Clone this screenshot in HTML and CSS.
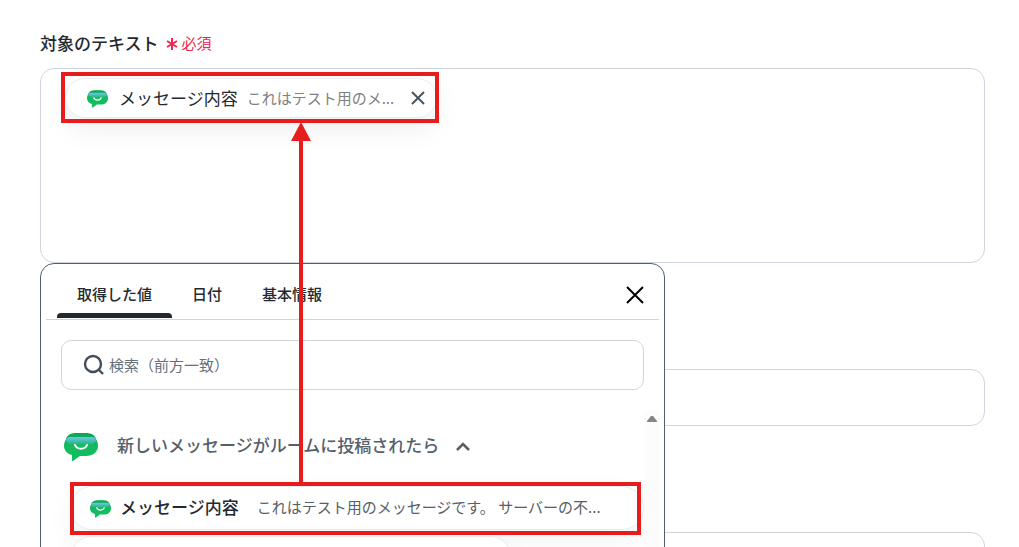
FILE: index.html
```
<!DOCTYPE html>
<html lang="ja">
<head>
    <meta charset="UTF-8">
    <meta name="viewport" content="width=device-width, initial-scale=1.0">
    <title>対象のテキスト</title>
    <link rel="stylesheet" href="styles.css">
</head>
<body>
    <svg class="symbols" aria-hidden="true">
        <defs>
            <linearGradient id="visor" x1="0" y1="0" x2="0" y2="1">
                <stop offset="0" stop-color="#6fc3f0"/>
                <stop offset="0.3" stop-color="#56bfc8"/>
                <stop offset="0.9" stop-color="#14bb60"/>
            </linearGradient>
            <linearGradient id="bubble" x1="0" y1="0" x2="0" y2="1">
                <stop offset="0" stop-color="#08a84f"/>
                <stop offset="0.5" stop-color="#14bb60"/>
                <stop offset="1" stop-color="#12bd5e"/>
            </linearGradient>
        </defs>
        <symbol id="bot" viewBox="0 0 34 28">
            <path fill="url(#bubble)" d="M12 0H22C27 0 31 2 32 6C33 8 34 10 34 13C34 19 29 23 22 23H16L9 28C8 28 8 28 8 27V22C3 21 0 17 0 13C0 10 1 8 2 6C3 2 7 0 12 0Z"/>
            <path fill="url(#visor)" d="M6 4H28C31 4 32 6 32 8C31 11 26 13 17 13S3 11 2 8C2 6 3 4 6 4Z"/>
            <path fill="none" stroke="#fff" stroke-width="2" stroke-linecap="round" d="M11 12C13 17 21 17 23 12"/>
        </symbol>
    </svg>

    <main class="page">
        <div class="field">
            <div class="label-row">
                <span class="label" id="target_label">対象のテキスト</span>
                <span class="required">
                    <svg width="12" height="12" viewBox="0 0 12 12" aria-hidden="true"><path d="M6 0V12M1 3L11 9M11 3L1 9"/></svg>
                    <span>必須</span>
                </span>
            </div>
            <div class="editor" role="group" aria-labelledby="target_label">
                <div class="chip">
                    <svg class="bot"><use href="#bot"/></svg>
                    <span class="chip-name">メッセージ内容</span>
                    <span class="chip-value">これはテスト用のメ...</span>
                    <button class="icon-btn chip-close" type="button" aria-label="削除">
                        <svg width="16" height="16" viewBox="0 0 16 16"><path d="M2 2L14 14M14 2L2 14"/></svg>
                    </button>
                </div>
            </div>

            <!-- 値の選択パネル -->
            <section class="panel">
                <div class="panel-head">
                    <div class="tabs" role="tablist">
                        <button class="tab active" type="button" role="tab" aria-selected="true">取得した値</button>
                        <button class="tab" type="button" role="tab" aria-selected="false">日付</button>
                        <button class="tab" type="button" role="tab" aria-selected="false">基本情報</button>
                    </div>
                    <button class="icon-btn panel-close" type="button" aria-label="閉じる">
                        <svg width="20" height="20" viewBox="0 0 20 20"><path d="M2 2L18 18M18 2L2 18"/></svg>
                    </button>
                </div>
                <label class="search">
                    <svg width="22" height="22" viewBox="0 0 22 22" aria-hidden="true"><circle cx="10" cy="10" r="8"/><path d="M16 16L20 20"/></svg>
                    <input type="text" placeholder="検索（前方一致）" aria-label="検索（前方一致）">
                </label>
                <div class="results">
                    <div class="list">
                        <button class="group" type="button" aria-expanded="true">
                            <svg class="bot-large"><use href="#bot"/></svg>
                            <span class="group-name">新しいメッセージがルームに投稿されたら</span>
                            <svg class="chevron" width="16" height="12" viewBox="0 0 16 12"><path d="M2 9L8 3L14 9"/></svg>
                        </button>
                        <button class="item" type="button">
                            <svg class="bot"><use href="#bot"/></svg>
                            <span class="item-name">メッセージ内容</span>
                            <span class="item-value">これはテスト用のメッセージです。 サーバーの不...</span>
                        </button>
                        <button class="item item-short" type="button" aria-label="次の値"></button>
                    </div>
                    <div class="track">
                        <svg width="10" height="8" viewBox="0 0 10 8" aria-hidden="true"><path d="M4 1H6L10 6V7H0V6Z"/></svg>
                    </div>
                </div>
            </section>
        </div>

        <input class="text-box" type="text" aria-label="入力欄 2">
        <input class="text-box" type="text" aria-label="入力欄 3">

        <!-- 説明用の赤枠と矢印 -->
        <div class="mark mark-chip"></div>
        <div class="mark mark-item"></div>
        <svg class="arrow" width="20" height="361" viewBox="0 0 20 361" aria-hidden="true">
            <path d="M10 0L20 19H12V361H8V19H0Z"/>
        </svg>
    </main>
</body>
</html>
```
FILE: styles.css
```
* {
    box-sizing: border-box;
}
body {
    margin: 0;
    height: 100vh;
    overflow: hidden;
    background: #fff;
    color: #24292f;
    font-family: "Noto Sans CJK JP", sans-serif;
    font-size: 15px;
}
button, input {
    font: inherit;
    color: inherit;
}
button {
    padding: 0;
    border: none;
    background: none;
    cursor: pointer;
}
svg {
    flex: none;
}
.symbols {
    position: absolute;
    width: 0;
    height: 0;
}
.page {
    position: relative;
    padding: 32px 34px 0 40px;
}
.field {
    position: relative;
    margin-bottom: 106px;
}
.label-row {
    display: flex;
    align-items: center;
    gap: 7px;
    height: 24px;
    margin-bottom: 12px;
}
.label {
    padding-bottom: 4px;
    font-size: 17px;
    font-weight: 500;
}
.required {
    display: flex;
    align-items: center;
    gap: 4px;
    color: #f0264f;
}
.required svg {
    stroke: #f0264f;
    stroke-width: 2;
}
.required span {
    padding-bottom: 4px;
}
.editor {
    height: 195px;
    padding: 9px 24px;
    border: 1px solid #cfd6de;
    border-radius: 14px;
    overflow: hidden;
}
.chip {
    display: inline-flex;
    align-items: center;
    width: 372px;
    height: 40px;
    padding: 0 10px 0 21px;
    border: 1px solid #e8ecf0;
    border-radius: 20px;
    background: #fff;
    box-shadow: 0 10px 30px rgba(0, 0, 0, 0.07);
}
.bot {
    width: 21px;
    height: 18px;
    margin-top: 1px;
}
.chip-name {
    margin: 0 9px 0 11px;
    padding-bottom: 2px;
    font-size: 17px;
}
.chip-value {
    padding-bottom: 2px;
    color: #808080;
}
.icon-btn {
    display: flex;
    margin-left: auto;
}
.chip-close {
    stroke: #4a5460;
    stroke-width: 2;
}

/* panel */
.panel {
    position: absolute;
    top: 100%;
    left: 0;
    width: 625px;
    padding: 0 5px;
    border: 1px solid #535d69;
    border-radius: 14px 14px 0 0;
    background: #fff;
}
.panel-head {
    display: flex;
    align-items: center;
    height: 56px;
    padding: 0 14px 0 11px;
    border-bottom: 1px solid #cfd6de;
}
.tabs {
    display: flex;
    align-self: stretch;
}
.tab {
    position: relative;
    padding: 4px 20px 0;
    font-weight: 500;
}
.tab.active::after {
    content: "";
    position: absolute;
    left: 0;
    right: 0;
    bottom: 1px;
    height: 5px;
    border-radius: 4px 4px 0 0;
    background: #24292f;
}
.panel-close {
    margin-top: 6px;
    stroke: #000;
    stroke-width: 2;
}
.search {
    display: flex;
    align-items: center;
    gap: 4px;
    height: 50px;
    margin: 20px 15px;
    padding: 0 21px;
    border: 1px solid #cfd6de;
    border-radius: 10px;
}
.search svg {
    fill: none;
    stroke: #444e5a;
    stroke-width: 2.4;
}
.search input {
    flex: 1;
    min-width: 0;
    padding: 0 0 2px;
    border: none;
    outline: none;
    background: none;
}
.search input::placeholder {
    color: #66707b;
    opacity: 1;
}
.results {
    display: flex;
    height: 240px;
    overflow: hidden;
}
.list {
    display: flex;
    flex: 1;
    flex-direction: column;
    align-items: flex-start;
    gap: 6px;
    padding: 18px 0 0 18px;
}
.group {
    display: flex;
    align-items: center;
    height: 36px;
    margin-bottom: 16px;
    color: #57606a;
    font-size: 17px;
    font-weight: 500;
}
.group-name {
    padding-bottom: 4px;
}
.bot-large {
    width: 34px;
    height: 28px;
    margin: 2px 19px 0 0;
}
.chevron {
    margin: 2px 0 0 16px;
    fill: none;
    stroke: #57606a;
    stroke-width: 2.6;
}
.item {
    display: flex;
    align-items: center;
    align-self: stretch;
    flex: none;
    height: 44px;
    margin-left: 6px;
    padding-left: 19px;
    border: 1px solid #e8ecf0;
    border-radius: 22px;
    background: #fff;
    box-shadow: 0 10px 30px rgba(0, 0, 0, 0.05);
}
.item-short {
    align-self: flex-start;
    width: 442px;
}
.item-name {
    margin: 0 18px 0 9px;
    padding-bottom: 4px;
    font-size: 17px;
    font-weight: 500;
}
.item-value {
    padding-bottom: 4px;
    color: #57606a;
}
.track {
    display: flex;
    justify-content: center;
    width: 15px;
    padding-top: 5px;
    background: #fcfcfc;
}
.track svg {
    fill: #858585;
}

.text-box {
    display: block;
    width: 100%;
    height: 57px;
    margin-bottom: 106px;
    padding: 0 20px;
    border: 1px solid #cfd6de;
    border-radius: 14px;
}

/* annotations over the form */
.mark {
    position: absolute;
    border: 4px solid #e71d1d;
    pointer-events: none;
}
.mark-chip {
    top: 72px;
    left: 61px;
    width: 378px;
    height: 51px;
}
.mark-item {
    top: 482px;
    left: 70px;
    width: 571px;
    height: 53px;
}
.arrow {
    position: absolute;
    top: 122px;
    left: 291px;
    fill: #e71d1d;
    pointer-events: none;
}
```
